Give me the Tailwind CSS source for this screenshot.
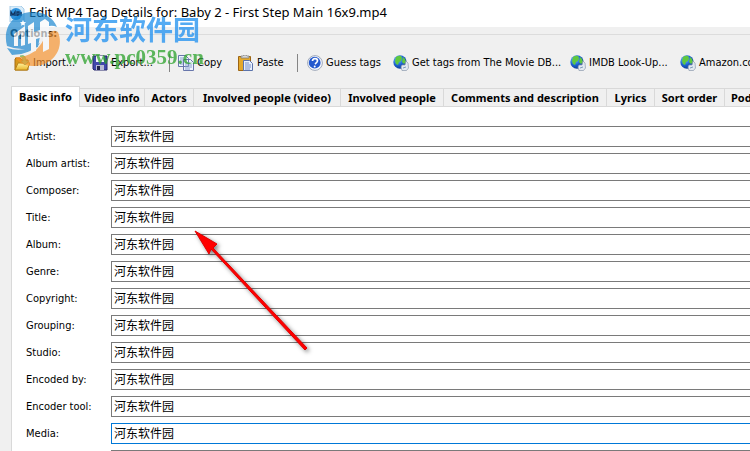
<!DOCTYPE html>
<html lang="en">
<head>
<meta charset="utf-8">
<title>Edit MP4 Tag Details</title>
<script src="https://cdn.jsdelivr.net/npm/@tailwindcss/browser@4"></script>
</head>
<body class="relative flex h-screen flex-col overflow-hidden bg-[#f0f0f0] font-['DejaVu_Sans_Condensed','Noto_Sans_CJK_SC',sans-serif] text-[11px] leading-4 text-black">
<svg class="absolute size-0" aria-hidden="true">
  <defs>
    <radialGradient id="sea" cx=".35" cy=".3" r=".8"><stop offset="0" stop-color="#83c9ff"/><stop offset=".5" stop-color="#1f68d5"/><stop offset="1" stop-color="#082f86"/></radialGradient>
    <linearGradient id="fold" x2="0" y2="1"><stop stop-color="#fff2a0"/><stop offset="1" stop-color="#eab72c"/></linearGradient>
    <symbol id="globe" viewBox="0 0 16 16">
      <circle cx="7" cy="7" r="6.7" fill="url(#sea)"/>
      <path d="M3 2q3-2 5-1l1 2-1 3-2 1-1 3-2-1-1-3zM10 2l2 2 1 3-2 2-2-2z" fill="#5fc83e"/>
      <path d="M8 12l1-2 3 0 1-4 2 2 .5 5-2 2.500H9z" fill="#e3e9f2" stroke="#8c9aac" stroke-width=".7"/>
      <path d="M10 13l3-1" stroke="#7f9dbb"/>
    </symbol>
  </defs>
</svg>

<header class="flex h-[27px] shrink-0 items-center gap-1 bg-white pl-[9px] font-['Noto_Sans',sans-serif] text-[13px]">
  <svg class="size-4 shrink-0" viewBox="0 0 16 16"><path d="M1 0h11l3 3v13H1z" fill="#d8ecfa" stroke="#a8cde8"/><circle cx="7" cy="8" r="6" fill="#2d91dc"/><path d="M2 10V6l2 3 2-3v4M8 10V6h2v3H8m4-3v4" fill="none" stroke="#12345f" stroke-width="1.3"/></svg>
  <h1 class="whitespace-nowrap pb-1">Edit MP4 Tag Details for: Baby 2 - First Step Main 16x9.mp4</h1>
</header>

<fieldset class="h-[59px] shrink-0 whitespace-nowrap">
  <div class="flex h-[14px] items-center"><span class="w-[9px] border-t border-[#dcdcdc]"></span><span class="px-px font-bold text-[#111]">Options:</span><span class="grow border-t border-[#dcdcdc]"></span></div>
  <div class="flex h-11 items-center pl-[14px]">
    <button class="flex w-[78px] shrink-0 items-center gap-[3px]"><svg class="size-4 shrink-0" viewBox="0 0 16 16"><path d="M1 15V4l1-1h4l2 2h6v10z" fill="#d6971b" stroke="#a46d12"/><path d="M1 15l3-7h12l-3 7z" fill="url(#fold)" stroke="#b88218"/><path d="M6 1q6-2 6 5h3l-4 4-4-4h2q0-4-3-5z" fill="#8bd079" stroke="#61a95a" stroke-width=".6"/></svg>Import...</button>
    <button class="flex w-[77px] shrink-0 items-center gap-[3px]"><svg class="size-4 shrink-0" viewBox="0 0 16 16"><path d="M1 1h14v14H2l-1-1z" fill="#4148ac" stroke="#27276d"/><path d="M4 1h8v6H4z" fill="#f4f4fc"/><path d="M4 10h8v5H4z" fill="#b8bad4"/><path d="M5 11h3v4H5z" fill="#22234b"/></svg>Export...</button>
    <span class="mr-2 h-[18px] w-px shrink-0 bg-[#858585]"></span>
    <button class="flex w-[60px] shrink-0 items-center gap-[3px]"><svg class="size-4 shrink-0" viewBox="0 0 16 16"><path d="M.5.5h7l3 3v8H.5zM5.500 4.500h7l3 3v8h-10z" fill="#edf3ff" stroke="#6876ab"/><path d="M2 3h4M2 5h3M2 7h3M2 9h3M7 8h5M7 10h7M7 12h7M7 14h5" stroke="#8ba1ce"/></svg>Copy</button>
    <button class="flex w-[59px] shrink-0 items-center gap-[3px]"><svg class="size-4 shrink-0" viewBox="0 0 16 16"><path d="M.5 1.500h12v14H.5z" fill="#e4a82b" stroke="#9c6514"/><path d="M3 3V1h2l1-1h2l1 1h2v2z" fill="#d8d8d8" stroke="#777" stroke-width=".7"/><path d="M5.500 5.500h6l3 3v7h-9z" fill="#e8f0ff" stroke="#5b73ab"/><path d="M7 8h4M7 10h6M7 12h6M7 14h5" stroke="#7891c7"/></svg>Paste</button>
    <span class="mr-[9px] h-[18px] w-px shrink-0 bg-[#858585]"></span>
    <button class="flex w-[86px] shrink-0 items-center gap-[3px]"><svg class="size-4 shrink-0" viewBox="0 0 16 16"><circle cx="8" cy="8" r="7.400" fill="#f5f8ff" stroke="#a0a9b9"/><circle cx="7.700" cy="7.700" r="5.900" fill="#2459ce"/><path d="M5.500 6q0-2.300 2.500-2.300T10.500 6Q10.500 7 8 9" fill="none" stroke="#fff" stroke-width="1.700"/><circle cx="7.700" cy="11.500" r="1" fill="#fff"/></svg>Guess tags</button>
    <button class="flex w-[177px] shrink-0 items-center gap-[3px]"><svg class="size-4 shrink-0"><use href="#globe"/></svg>Get tags from The Movie DB...</button>
    <button class="flex w-[110px] shrink-0 items-center gap-[3px]"><svg class="size-4 shrink-0"><use href="#globe"/></svg>IMDB Look-Up...</button>
    <button class="flex min-w-0 items-center gap-[3px] overflow-hidden"><svg class="size-4 shrink-0"><use href="#globe"/></svg>Amazon.com</button>
  </div>
</fieldset>

<nav role="tablist" class="flex h-[21px] shrink-0 items-end overflow-hidden whitespace-nowrap pl-[11px] font-['Noto_Sans',sans-serif] font-bold">
  <button role="tab" aria-selected="true" class="h-[21px] w-[69px] shrink-0 border border-b-0 border-[#d9d9d9] bg-white">Basic info</button>
  <button role="tab" class="h-[19px] w-[65px] shrink-0 border border-l-0 border-[#d9d9d9]">Video info</button>
  <button role="tab" class="h-[19px] w-[49px] shrink-0 border border-l-0 border-[#d9d9d9]">Actors</button>
  <button role="tab" class="h-[19px] w-[147px] shrink-0 border border-l-0 border-[#d9d9d9]">Involved people (video)</button>
  <button role="tab" class="h-[19px] w-[103px] shrink-0 border border-l-0 border-[#d9d9d9]">Involved people</button>
  <button role="tab" class="h-[19px] w-[163px] shrink-0 border border-l-0 border-[#d9d9d9]">Comments and description</button>
  <button role="tab" class="h-[19px] w-12 shrink-0 border border-l-0 border-[#d9d9d9]">Lyrics</button>
  <button role="tab" class="h-[19px] w-[70px] shrink-0 border border-l-0 border-[#d9d9d9]">Sort order</button>
  <button role="tab" class="h-[19px] shrink-0 border border-l-0 border-[#d9d9d9] px-[6px]">Podcast</button>
</nav>

<main class="ml-[11px] min-h-0 grow overflow-hidden border-l border-[#d9d9d9] bg-white pl-[14px] pt-[19px]">
  <form id="fields" class="flex flex-col gap-[6px]"></form>
</main>

<svg class="pointer-events-none absolute left-[180px] top-[220px] h-[140px] w-[140px]" viewBox="0 0 140 140" aria-hidden="true">
  <g class="drop-shadow-[2px_2px_2px_rgba(0,0,0,0.5)]"><path d="M15 11L37 24 33 28 127 128 125 130 31 29 29 34z" fill="#f00" stroke="#e00000" stroke-linejoin="round"/></g>
</svg>

<div class="pointer-events-none absolute left-1 top-[9px] flex items-start opacity-75">
  <svg class="h-[60px] w-[58px] opacity-90" viewBox="0 0 58 60" aria-hidden="true">
    <path d="M3 37C-2 18 10 3 29 3 41 3 49 9 53 18 44 14 38 20 36 27L34 38Q18 43 3 37z" fill="#1583cf"/>
    <path d="M11 48C24 49 34 42 40 30 44 22 50 20 54 23 61 40 48 58 28 57 20 57 14 53 11 48z" fill="#f7932d"/>
    <path d="M3 39Q20 44 36 34 28 45 8 46z" fill="#1583cf"/>
    <path d="M10 37V25l11-8v19l-4 1V25l-3 2v10zM24 35V17l6-4v10l6-2V13l5-3 4 3v27l-6 3V28l-7 2v12l-5 1v-9z" fill="#f7fafc"/>
    <path d="M19 11l1 2 2 .2-1.500 1.500.5 2-2-1-2 1 .5-2-1.500-1.500 2-.2z" fill="#fff"/>
  </svg>
  <div class="flex flex-col gap-1 whitespace-nowrap pl-[3px] pt-[6px]">
    <span class="font-['Noto_Sans_CJK_SC',sans-serif] text-[27px] font-bold leading-[28px] text-[#1c8ff0]">河东软件园</span>
    <span class="font-['Liberation_Serif',serif] text-[21px] font-bold leading-[20px] text-[#2ba22b]">www.pc0359.cn</span>
  </div>
</div>

<script>
  const names = ["Artist", "Album artist", "Composer", "Title", "Album", "Genre", "Copyright", "Grouping", "Studio", "Encoded by", "Encoder tool", "Media", "Comment"];
  document.getElementById("fields").innerHTML = names.map((name, i) => `
    <div class="flex h-[21px] items-center">
      <label for="f${i}" class="w-[85px] shrink-0">${name}:</label>
      <input id="f${i}" value="河东软件园" class="h-[21px] min-w-0 grow border border-r-0 ${name === "Media" ? "border-[#0078d7]" : "border-[#7a7a7a]"} bg-white pb-[2px] pl-[2px] font-['Noto_Sans_CJK_SC',sans-serif] text-[12px] outline-none">
    </div>`).join("");
</script>
</body>
</html>
